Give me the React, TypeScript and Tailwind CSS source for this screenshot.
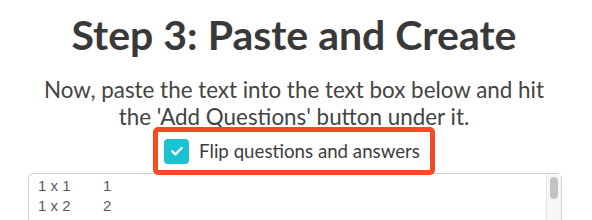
import React from 'react';

const App: React.FC = () => {
  return (
    <div className="w-[592px] h-[220px] overflow-hidden bg-white font-['Lato',sans-serif]">
      <div className="flex flex-col items-center pt-[11px] pr-[4px]">
        {/* Title */}
        <h1 className="text-[41px] leading-[48px] font-bold text-[#393939]">
          Step 3: Paste and Create
        </h1>

        {/* Instructions */}
        <p className="mt-[17px] text-center text-[22.4px] leading-[27px] text-[#444]">
          Now, paste the text into the text box below and hit
          <br />
          the 'Add Questions' button under it.
        </p>

        {/* Highlighted option */}
        <div className="relative z-10 -mb-[2px] -mt-[3px] flex items-center gap-[10px] rounded-[5px] border-[5px] border-[#f44b24] bg-white py-[5px] pl-[6px] pr-[10px]">
          <span className="flex h-[25px] w-[25px] items-center justify-center rounded-[4px] bg-[#1bc2cf]">
            <svg viewBox="0 0 24 24" className="h-[16px] w-[16px]" fill="none" stroke="white" strokeWidth="3.5" strokeLinecap="round" strokeLinejoin="round">
              <path d="M5 12.5l4.5 4.5L19 7.5" />
            </svg>
          </span>
          <span className="text-[18.7px] leading-[28px] text-[#3d3d3d]">Flip questions and answers</span>
        </div>
      </div>

      {/* Text box */}
      <div className="ml-[28px] flex h-[80px] w-[534px] rounded-t-[5px] border border-[#cfcfcf] bg-white">
        <div className="flex-1 pl-[9px] pt-[2px] font-['Liberation_Sans',sans-serif] text-[15px] leading-[20px] text-[#5a5a5a]">
          <div className="flex"><span className="w-[65px]">1 x 1</span><span>1</span></div>
          <div className="flex"><span className="w-[65px]">1 x 2</span><span>2</span></div>
        </div>
        <div className="w-[15px] border-l border-[#e6e6e6] bg-[#f7f7f7] pt-[3px]">
          <div className="mx-auto h-[22px] w-[8px] rounded-full bg-[#c2c2c2]" />
        </div>
      </div>
    </div>
  );
};

export default App;
